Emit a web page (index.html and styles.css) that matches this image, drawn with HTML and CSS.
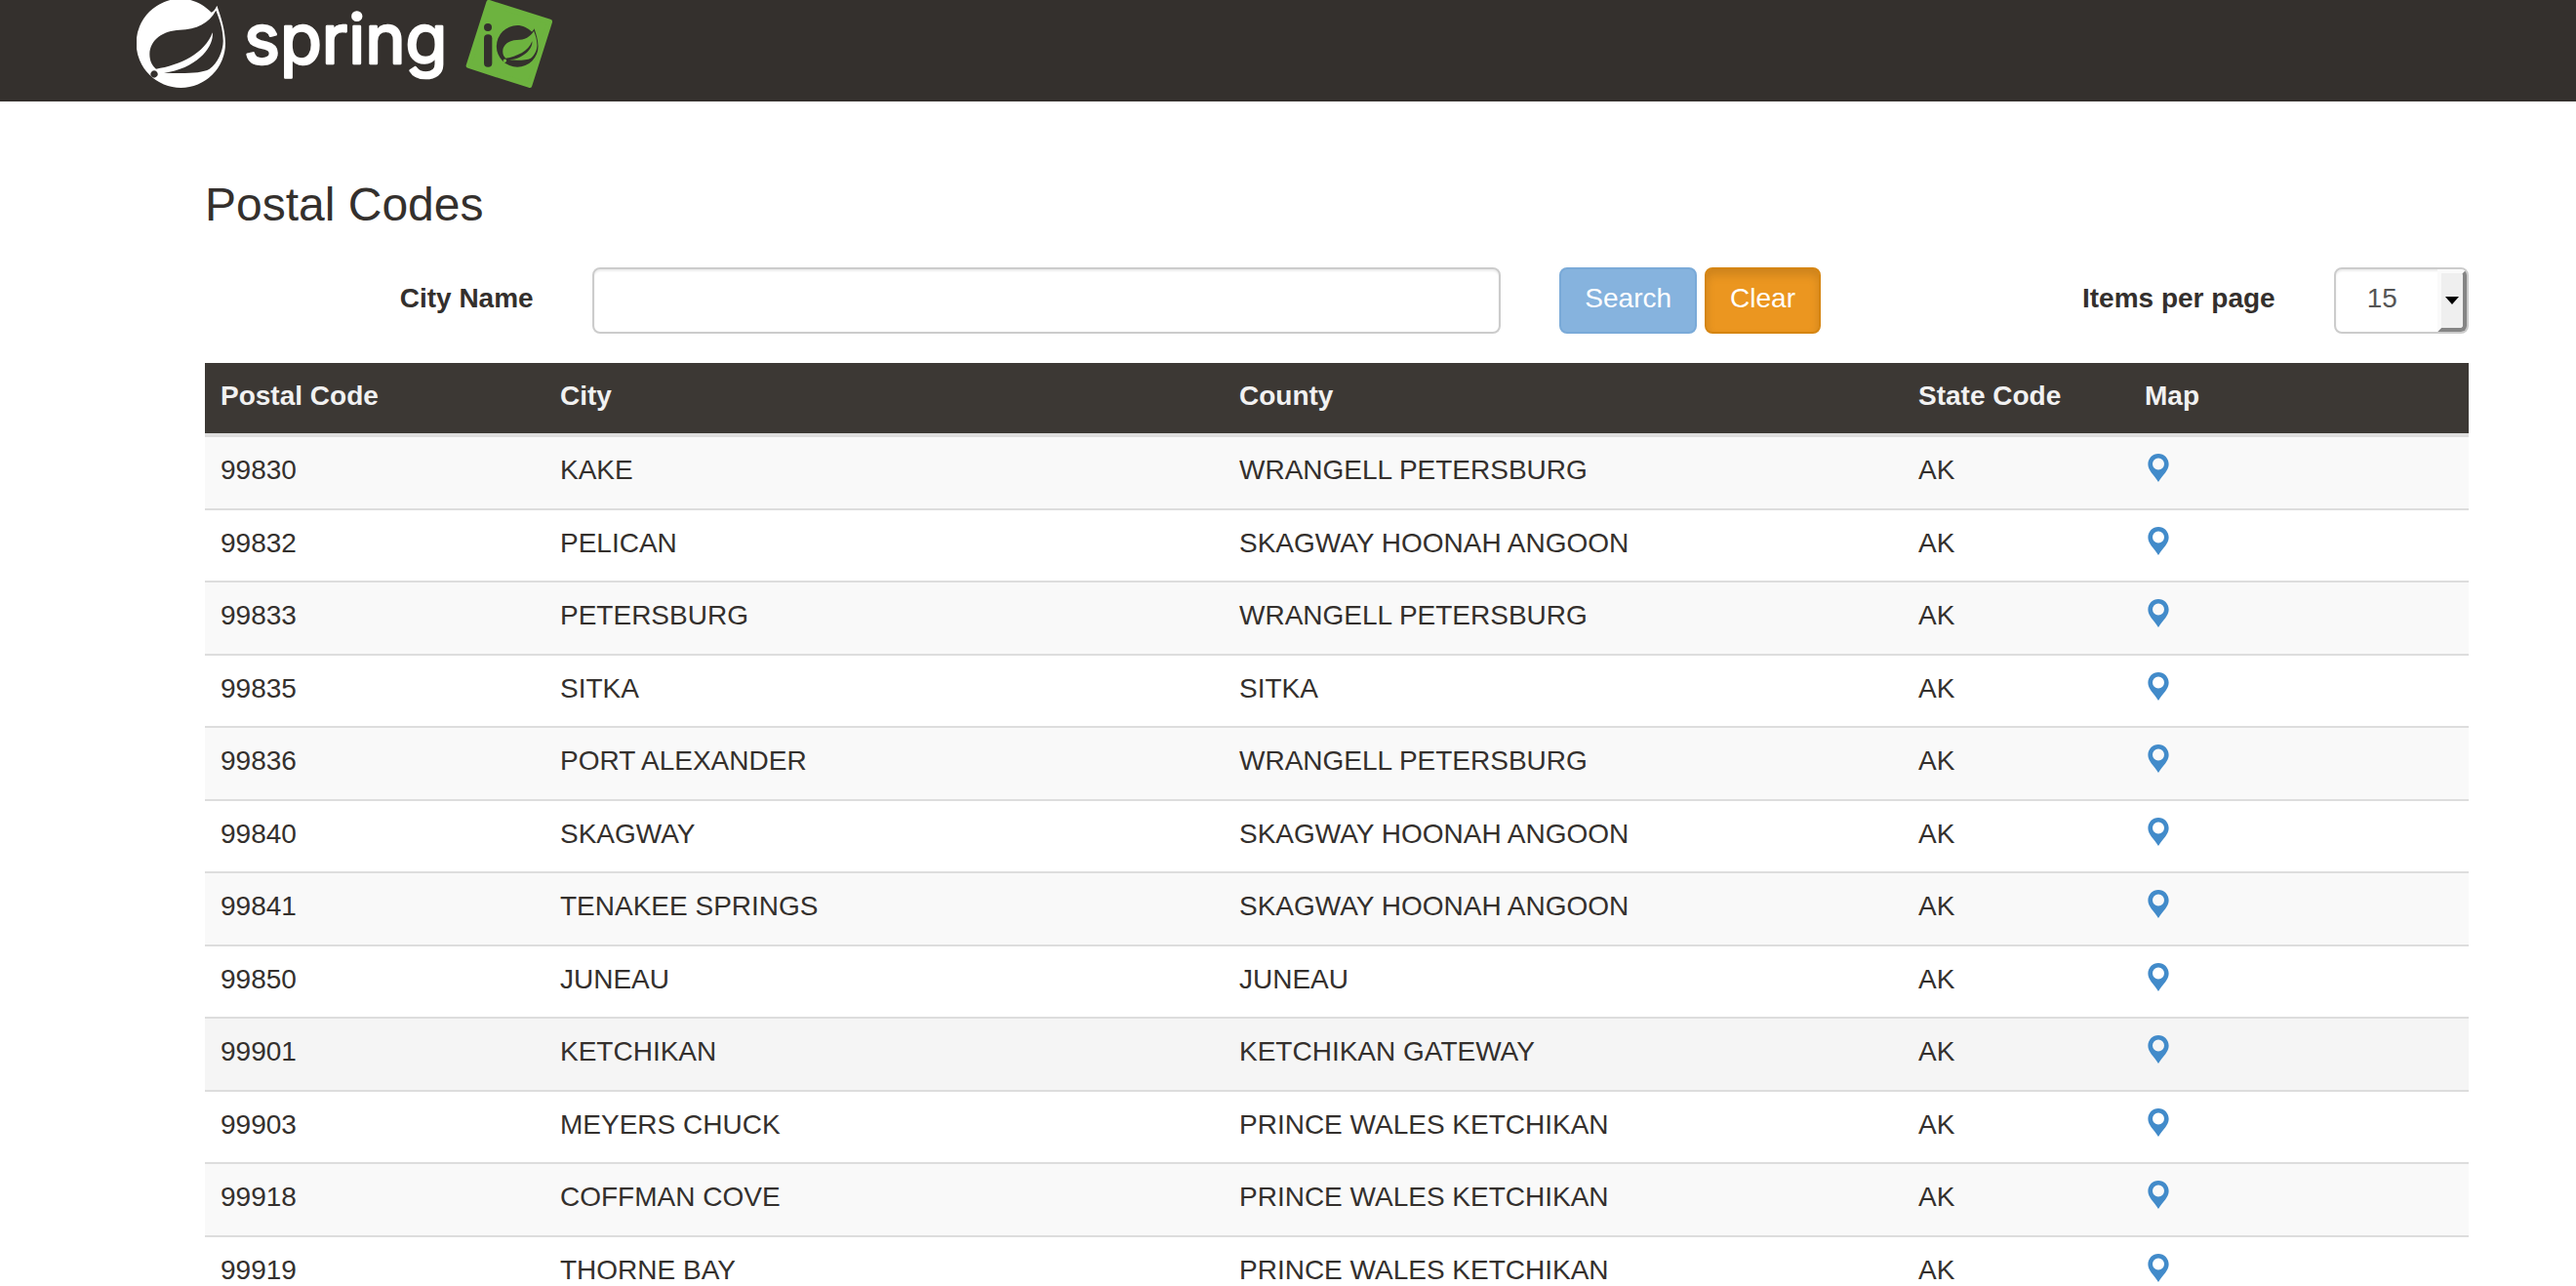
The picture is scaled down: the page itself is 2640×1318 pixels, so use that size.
FILE: index.html
```html
<!DOCTYPE html>
<html lang="en">
<head>
<meta charset="utf-8">
<meta name="viewport" content="width=device-width, initial-scale=1">
<title>Postal Codes</title>
<link rel="stylesheet" href="styles.css">
</head>
<body>
<svg class="defs" aria-hidden="true">
  <symbol id="leaf" viewBox="0 0 276 276" overflow="visible">
    <path fill="currentColor" fill-rule="evenodd" d="M230 38C204 12 170 -4 136 -4A137 137 0 1 0 273 133C272 88 258 50 247 17C242 28 237 35 230 38ZM244 32C222 72 185 90 132 92C82 94 41 122 40 166C40 186 47 202 60 212C130 202 212 164 233 100C240 142 186 212 84 224C150 226 200 226 224 212C250 194 267 154 266 124C265 86 255 60 244 32ZM54 217a11 11 0 1 0 .1 0Z"/>
  </symbol>
  <symbol id="pin" viewBox="0 0 22 30">
    <path fill="currentColor" fill-rule="evenodd" d="M11 0C4.900 0 0 4.900 0 11C0 17.500 6 22 11 30C16 22 22 17.500 22 11C22 4.900 17.100 0 11 0ZM11 4.600a6.200 6.200 0 1 1 0 12.400a6.200 6.200 0 1 1 0-12.400Z"/>
  </symbol>
</svg>

<header class="topbar">
  <a class="brand" href="#" aria-label="spring io">
    <svg class="logo" viewBox="0 0 1290 276">
      <use class="logo-light" href="#leaf" x="0" y="0" width="276" height="276"/>
      <text class="wordmark" x="330" y="194">spring</text>
      <path class="badge" d="M1083 8L1270 67L1208 262L1021 202Z"/>
      <circle class="logo-dark" cx="1080" cy="84" r="12"/>
      <rect class="logo-dark" x="1068" y="106" width="25" height="100" rx="12"/>
      <use class="logo-dark" href="#leaf" x="1107" y="80" width="129" height="129"/>
    </svg>
  </a>
</header>

<main class="content">
  <h1 class="title">Postal Codes</h1>
  <form class="filters">
    <label class="label city-label" for="city">City Name</label>
    <input class="field city-field" id="city" type="text">
    <div class="actions">
      <button class="btn btn-search" type="submit" disabled>Search</button>
      <button class="btn btn-clear" type="button">Clear</button>
    </div>
    <label class="label size-label" for="size">Items per page</label>
    <div class="select">
      <select class="field size-field" id="size">
        <option>15</option>
        <option>30</option>
        <option>50</option>
      </select>
      <span class="stepper"></span>
    </div>
  </form>

  <table class="codes">
    <colgroup>
      <col class="col-code"><col class="col-name"><col class="col-name"><col class="col-state"><col class="col-map">
    </colgroup>
    <thead>
      <tr><th>Postal Code</th><th>City</th><th>County</th><th>State Code</th><th>Map</th></tr>
    </thead>
    <tbody>
      <tr><td>99830</td><td>KAKE</td><td>WRANGELL PETERSBURG</td><td>AK</td><td><a class="pin" href="#" aria-label="Map"><svg><use href="#pin"/></svg></a></td></tr>
      <tr><td>99832</td><td>PELICAN</td><td>SKAGWAY HOONAH ANGOON</td><td>AK</td><td><a class="pin" href="#" aria-label="Map"><svg><use href="#pin"/></svg></a></td></tr>
      <tr><td>99833</td><td>PETERSBURG</td><td>WRANGELL PETERSBURG</td><td>AK</td><td><a class="pin" href="#" aria-label="Map"><svg><use href="#pin"/></svg></a></td></tr>
      <tr><td>99835</td><td>SITKA</td><td>SITKA</td><td>AK</td><td><a class="pin" href="#" aria-label="Map"><svg><use href="#pin"/></svg></a></td></tr>
      <tr><td>99836</td><td>PORT ALEXANDER</td><td>WRANGELL PETERSBURG</td><td>AK</td><td><a class="pin" href="#" aria-label="Map"><svg><use href="#pin"/></svg></a></td></tr>
      <tr><td>99840</td><td>SKAGWAY</td><td>SKAGWAY HOONAH ANGOON</td><td>AK</td><td><a class="pin" href="#" aria-label="Map"><svg><use href="#pin"/></svg></a></td></tr>
      <tr><td>99841</td><td>TENAKEE SPRINGS</td><td>SKAGWAY HOONAH ANGOON</td><td>AK</td><td><a class="pin" href="#" aria-label="Map"><svg><use href="#pin"/></svg></a></td></tr>
      <tr><td>99850</td><td>JUNEAU</td><td>JUNEAU</td><td>AK</td><td><a class="pin" href="#" aria-label="Map"><svg><use href="#pin"/></svg></a></td></tr>
      <tr class="current"><td>99901</td><td>KETCHIKAN</td><td>KETCHIKAN GATEWAY</td><td>AK</td><td><a class="pin" href="#" aria-label="Map"><svg><use href="#pin"/></svg></a></td></tr>
      <tr><td>99903</td><td>MEYERS CHUCK</td><td>PRINCE WALES KETCHIKAN</td><td>AK</td><td><a class="pin" href="#" aria-label="Map"><svg><use href="#pin"/></svg></a></td></tr>
      <tr><td>99918</td><td>COFFMAN COVE</td><td>PRINCE WALES KETCHIKAN</td><td>AK</td><td><a class="pin" href="#" aria-label="Map"><svg><use href="#pin"/></svg></a></td></tr>
      <tr><td>99919</td><td>THORNE BAY</td><td>PRINCE WALES KETCHIKAN</td><td>AK</td><td><a class="pin" href="#" aria-label="Map"><svg><use href="#pin"/></svg></a></td></tr>
    </tbody>
  </table>
</main>
</body>
</html>
```
FILE: styles.css
```css
* { box-sizing: border-box; }

body {
  margin: 0;
  background: #fff;
  color: #34302d;
  font: 28px/40px "Liberation Sans", Arial, sans-serif;
}

.defs { position: absolute; width: 0; height: 0; }

.topbar {
  height: 104px;
  padding-left: 140px;
  background: #34302d;
}
.brand { display: inline-block; color: #fff; }
.logo { display: block; width: 430px; height: 92px; }
.logo-light { color: #fff; }
.logo-dark { color: #34302d; fill: #34302d; }
.wordmark {
  font: 210px Inter, sans-serif;
  fill: #fff;
  stroke: #fff;
  stroke-width: 8px;
  stroke-linejoin: round;
}
.badge {
  fill: #6db33f;
  stroke: #6db33f;
  stroke-width: 16px;
  stroke-linejoin: round;
}

.content { padding: 80px 110px 0 210px; }
.title {
  margin: 0 0 38px;
  font-size: 48px;
  font-weight: 400;
  line-height: 52px;
}

.filters {
  display: grid;
  grid-template-columns: repeat(12, minmax(0, 1fr));
  column-gap: 60px;
  align-items: center;
  margin-bottom: 30px;
}
.label {
  font-weight: 700;
  text-align: right;
  white-space: nowrap;
  padding-bottom: 4px;
}
.city-label { grid-column: 1 / 3; }
.city-field { grid-column: 3 / 8; }
.actions { grid-column: 8 / 10; display: flex; gap: 8px; }
.size-label { grid-column: 10 / 12; }

.field {
  display: block;
  width: 100%;
  height: 68px;
  border: 2px solid #ccc;
  border-radius: 8px;
  background: #fff;
  box-shadow: inset 0 2px 2px rgba(0, 0, 0, .08);
  color: #555;
  font: inherit;
}
.city-field { padding: 12px 24px; }

.select { position: relative; }
.size-field { appearance: none; padding: 0 0 4px 32px; }
.stepper {
  position: absolute;
  top: 2px;
  right: 2px;
  bottom: 2px;
  width: 30px;
  border: 4px solid;
  border-color: #fafafa #858585 #858585 #fafafa;
  border-radius: 0 6px 6px 0;
  background: #efefef;
  pointer-events: none;
}
.stepper::after {
  content: "";
  position: absolute;
  top: 24px;
  left: 4px;
  border: 7px solid transparent;
  border-top: 8px solid #000;
  border-bottom: 0;
}

.btn {
  height: 68px;
  padding: 0 24px 4px;
  border: 2px solid;
  border-radius: 8px;
  color: #fff;
  font: inherit;
}
.btn-search { background: #86b3de; border-color: #7aaad8; }
.btn-clear {
  background: #eb9620;
  border-color: #d58512;
  box-shadow: inset 0 6px 10px rgba(0, 0, 0, .125);
}

.codes {
  width: 100%;
  table-layout: fixed;
  border-collapse: separate;
  border-spacing: 0;
}
.col-code { width: 15%; }
.col-name { width: 30%; }
.col-state { width: 10%; }
.col-map { width: 15%; }
.codes th, .codes td {
  text-align: left;
  vertical-align: top;
  padding: 14px 16px 0;
}
.codes th {
  height: 76px;
  border-bottom: 4px solid #ddd;
  background: #3c3834;
  color: #f1f1f1;
}
.codes td { height: 75px; border-bottom: 2px solid #ddd; }
.codes tr:nth-child(even) td { height: 74px; }
.codes tbody tr:nth-child(odd) { background: #f9f9f9; }
.codes tbody tr.current { background: #f5f5f5; }

.pin { display: block; padding: 3px 3px 0; color: #428bca; }
.pin svg { display: block; width: 22px; height: 29px; }
```
